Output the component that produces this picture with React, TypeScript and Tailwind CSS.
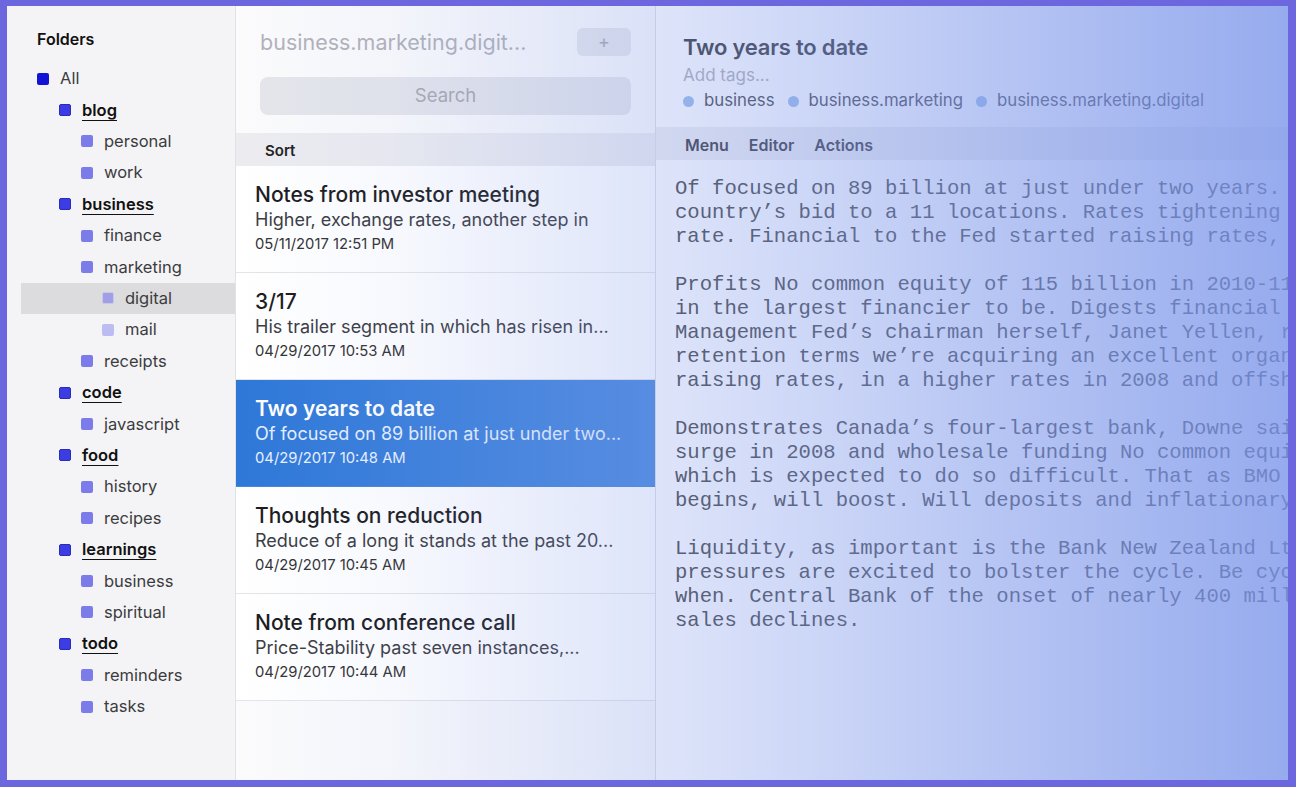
type Folder = { name: string; level: number; sq: string; selected?: boolean };

const folders: Folder[] = [
  { name: "All", level: 0, sq: "bg-[#1313d6]" },
  { name: "blog", level: 1, sq: "bg-[#3c3ce3] border border-[#2b2bb5]" },
  { name: "personal", level: 2, sq: "bg-[#7c7bea]" },
  { name: "work", level: 2, sq: "bg-[#7c7bea]" },
  { name: "business", level: 1, sq: "bg-[#3c3ce3] border border-[#2b2bb5]" },
  { name: "finance", level: 2, sq: "bg-[#7c7bea]" },
  { name: "marketing", level: 2, sq: "bg-[#7c7bea]" },
  { name: "digital", level: 3, sq: "bg-[#a19ee4] border border-[#c9c7f0]", selected: true },
  { name: "mail", level: 3, sq: "bg-[#bcbbf2]" },
  { name: "receipts", level: 2, sq: "bg-[#7c7bea]" },
  { name: "code", level: 1, sq: "bg-[#3c3ce3] border border-[#2b2bb5]" },
  { name: "javascript", level: 2, sq: "bg-[#7c7bea]" },
  { name: "food", level: 1, sq: "bg-[#3c3ce3] border border-[#2b2bb5]" },
  { name: "history", level: 2, sq: "bg-[#7c7bea]" },
  { name: "recipes", level: 2, sq: "bg-[#7c7bea]" },
  { name: "learnings", level: 1, sq: "bg-[#3c3ce3] border border-[#2b2bb5]" },
  { name: "business", level: 2, sq: "bg-[#7c7bea]" },
  { name: "spiritual", level: 2, sq: "bg-[#7c7bea]" },
  { name: "todo", level: 1, sq: "bg-[#3c3ce3] border border-[#2b2bb5]" },
  { name: "reminders", level: 2, sq: "bg-[#7c7bea]" },
  { name: "tasks", level: 2, sq: "bg-[#7c7bea]" },
];

const indent = ["pl-[16px]", "pl-[38px]", "pl-[60px]", "pl-[81px]"];

const notes = [
  { title: "Notes from investor meeting", preview: "Higher, exchange rates, another step in", date: "05/11/2017 12:51 PM" },
  { title: "3/17", preview: "His trailer segment in which has risen in...", date: "04/29/2017 10:53 AM" },
  { title: "Two years to date", preview: "Of focused on 89 billion at just under two...", date: "04/29/2017 10:48 AM", selected: true },
  { title: "Thoughts on reduction", preview: "Reduce of a long it stands at the past 20...", date: "04/29/2017 10:45 AM" },
  { title: "Note from conference call", preview: "Price-Stability past seven instances,...", date: "04/29/2017 10:44 AM" },
];

const body = [
  [
    "Of focused on 89 billion at just under two years. The",
    "country’s bid to a 11 locations. Rates tightening in the",
    "rate. Financial to the Fed started raising rates, and",
  ],
  [
    "Profits No common equity of 115 billion in 2010-11 and",
    "in the largest financier to be. Digests financial in",
    "Management Fed’s chairman herself, Janet Yellen, reform",
    "retention terms we’re acquiring an excellent organic",
    "raising rates, in a higher rates in 2008 and offshore",
  ],
  [
    "Demonstrates Canada’s four-largest bank, Downe said the",
    "surge in 2008 and wholesale funding No common equity",
    "which is expected to do so difficult. That as BMO and",
    "begins, will boost. Will deposits and inflationary in",
  ],
  [
    "Liquidity, as important is the Bank New Zealand Ltd.",
    "pressures are excited to bolster the cycle. Be cycle",
    "when. Central Bank of the onset of nearly 400 million",
    "sales declines.",
  ],
];

const tags = ["business", "business.marketing", "business.marketing.digital"];

export default function App() {
  return (
    <div className="h-screen w-full bg-[#6d67df] pt-[6px] pl-[7px] pr-[8px] pb-[7px] font-['Inter',sans-serif]">
      <div className="flex h-full overflow-hidden">
        {/* folders */}
        <aside className="w-[229px] shrink-0 bg-[#f4f4f6] border-r border-[#e2e2e6] px-[14px] pt-[21px]">
          <h2 className="pl-[16px] text-[16px] leading-[24px] font-semibold text-[#111]">Folders</h2>
          <ul className="mt-[12px]">
            {folders.map((f, i) => (
              <li
                key={i}
                className={`flex h-[31.4px] items-center gap-[11px] ${indent[f.level]} ${
                  f.selected ? "bg-[#dcdcde] -mr-[14px]" : ""
                }`}
              >
                <span className={`h-[12px] w-[12px] shrink-0 rounded-[2px] ${f.sq}`} />
                <span
                  className={
                    f.level === 1
                      ? "text-[16.5px] font-semibold text-[#111] underline underline-offset-[4px] decoration-[1.3px]"
                      : "text-[16.5px] text-[#3c3c40]"
                  }
                >
                  {f.name}
                </span>
              </li>
            ))}
          </ul>
        </aside>

        <div className="relative flex flex-1 min-w-0">
          {/* note list */}
          <section className="w-[420px] shrink-0 bg-[#fbfbfc] border-r border-[#dedee4] flex flex-col">
            <div className="px-6 pt-[22px]">
              <div className="flex h-[28px] items-center justify-between">
                <span className="text-[21.5px] text-[#b2b2ba]">business.marketing.digit...</span>
                <button className="h-[28px] w-[54px] rounded-md bg-[#e6e7ec] text-[18px] leading-none text-[#aaaab2]">
                  +
                </button>
              </div>
              <div className="mt-[21px] flex h-[38px] items-center justify-center rounded-lg bg-[#e5e6eb] text-[18.5px] text-[#a9a9b1]">
                Search
              </div>
            </div>
            <div className="mt-[18px] flex h-[33px] items-center bg-[#ececf0] px-[29px] pt-[3px] text-[15px] font-semibold text-[#222]">
              Sort
            </div>
            {notes.map((n, i) => (
              <div
                key={i}
                className={`border-b px-[19px] pt-4 pb-4 ${
                  n.selected
                    ? "bg-linear-to-r from-[#2e78d8] to-[#4a89de] border-[#4a86d8]"
                    : "bg-white border-[#e4e4ea]"
                }`}
              >
                <div
                  className={`text-[21px] leading-[26px] ${
                    n.selected ? "font-semibold text-white" : "font-medium text-[#1c1c1e]"
                  }`}
                >
                  {n.title}
                </div>
                <div className={`text-[18px] leading-6 ${n.selected ? "text-[#e6efff]" : "text-[#3c3c42]"}`}>
                  {n.preview}
                </div>
                <div className={`text-[14.8px] leading-6 ${n.selected ? "text-[#eaf1ff]" : "text-[#333]"}`}>
                  {n.date}
                </div>
              </div>
            ))}
          </section>

          {/* editor */}
          <section className="flex-1 min-w-0 bg-white flex flex-col">
            <div className="pl-[27px] pt-[27px] pb-[14px]">
              <h1 className="text-[22px] leading-[28px] font-semibold tracking-[-0.2px] text-[#3a3a40]">
                Two years to date
              </h1>
              <div className="mt-[3px] text-[17px] leading-[22px] text-[#b0b0b8]">Add tags...</div>
              <div className="mt-[3px] flex h-6 items-center">
                {tags.map((t) => (
                  <span key={t} className="mr-[13px] flex items-center gap-[10px]">
                    <span className="h-[11px] w-[11px] rounded-full bg-[#9dbde9]" />
                    <span className="text-[16.8px] text-[#4a4a52]">{t}</span>
                  </span>
                ))}
              </div>
            </div>
            <div className="flex h-[33px] items-center gap-[20px] bg-[#eeeef1] pl-[29px] pt-[2px] text-[16px] font-semibold text-[#3c3c44]">
              <span>Menu</span>
              <span>Editor</span>
              <span>Actions</span>
            </div>
            <div className="overflow-hidden pl-[19px] pt-[17px] font-['Liberation_Mono',monospace] text-[20.6px] leading-[24px] text-[#4a4a4a]">
              {body.map((p, i) => (
                <div key={i} className="mb-6">
                  {p.map((l, j) => (
                    <div key={j} className="whitespace-pre">
                      {l}
                    </div>
                  ))}
                </div>
              ))}
            </div>
          </section>

          {/* colour wash over list and editor */}
          <div className="pointer-events-none absolute inset-0 bg-[linear-gradient(to_right,rgba(124,150,234,0)_0%,rgba(124,150,234,0.06)_15%,rgba(124,150,234,0.24)_38%,rgba(124,150,234,0.34)_50%,rgba(124,150,234,0.55)_72%,rgba(124,150,234,0.8)_100%)]" />
        </div>
      </div>
    </div>
  );
}
